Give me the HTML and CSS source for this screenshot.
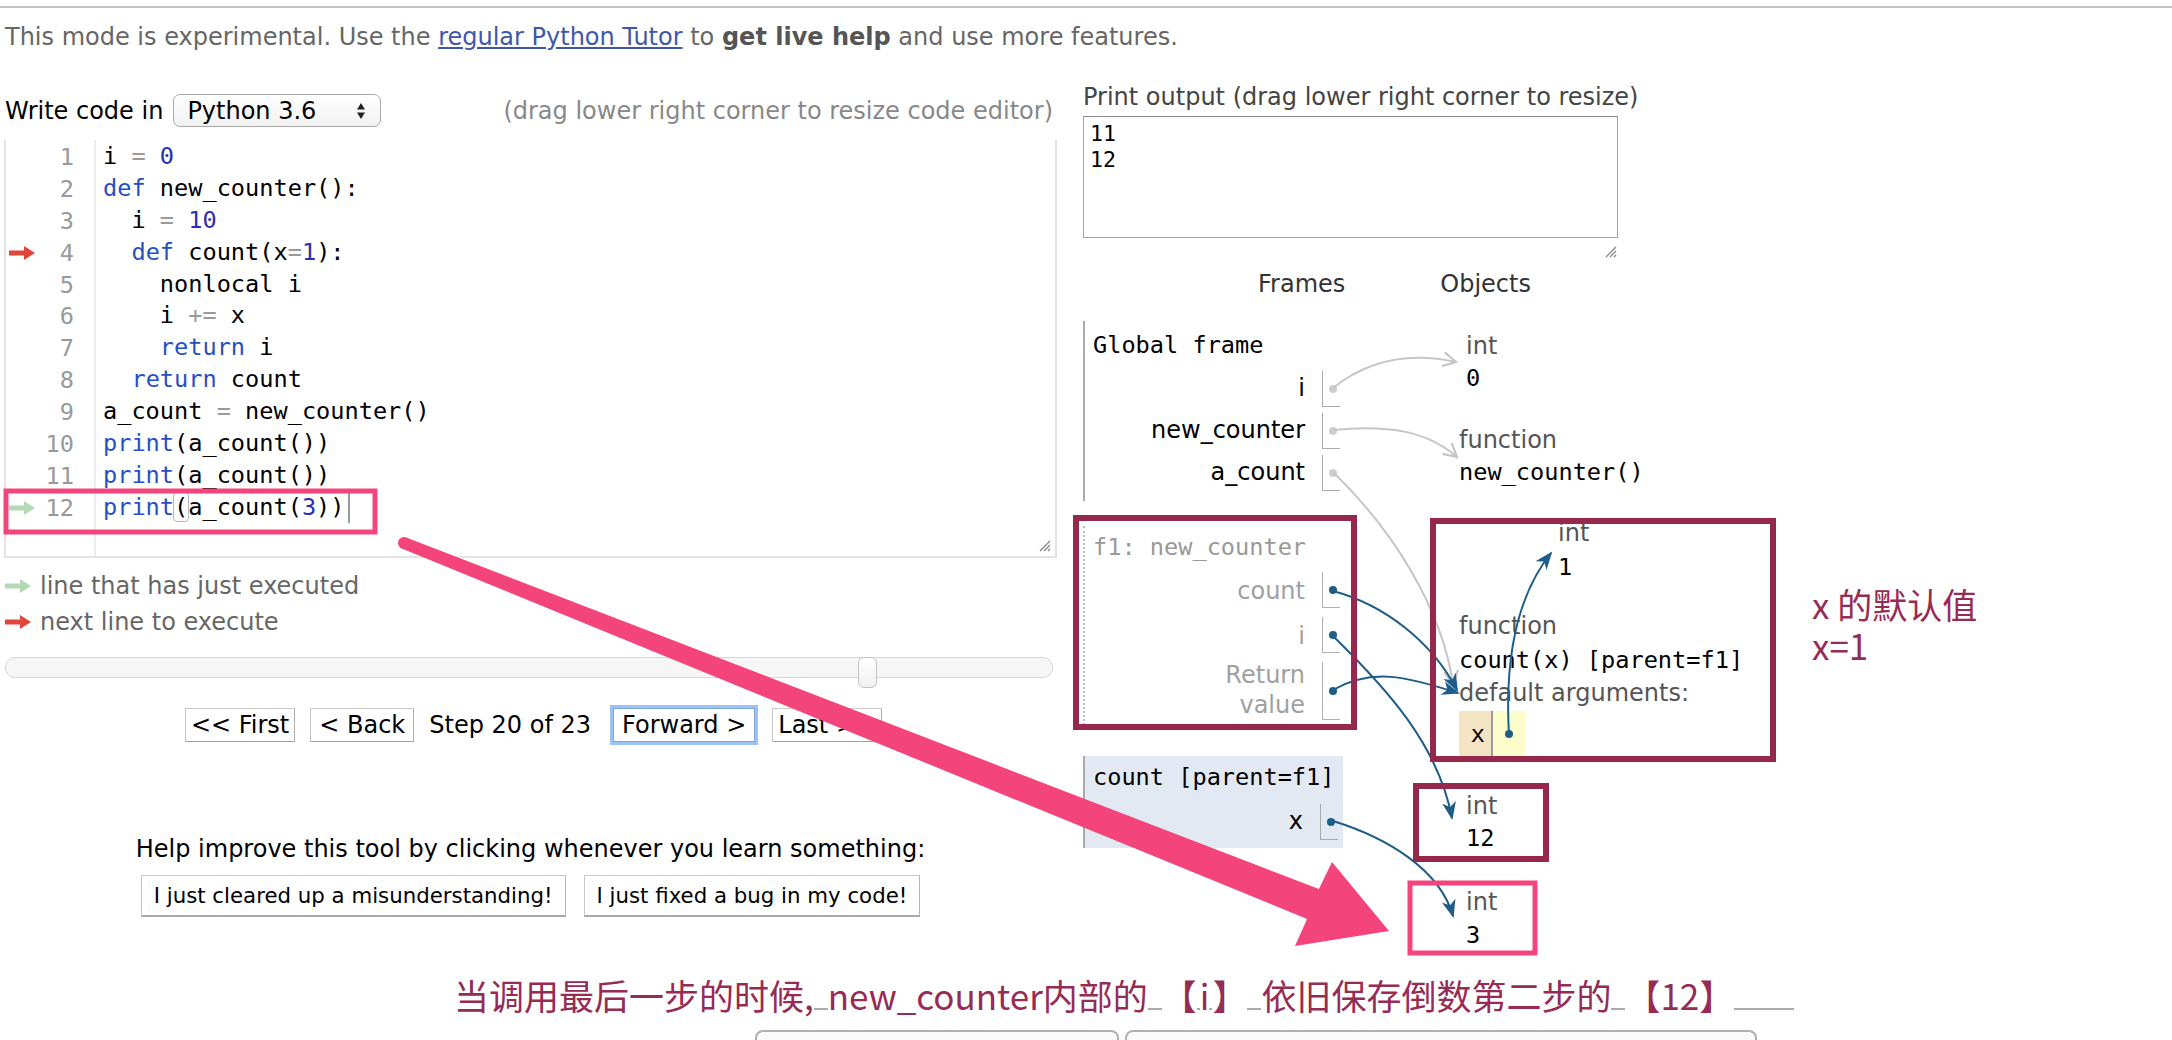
FILE: index.html
```html
<!DOCTYPE html>
<html lang="zh-CN">
<head>
<meta charset="utf-8">
<title>Python Tutor - Live Programming Mode</title>
<link rel="stylesheet" href="styles.css">
</head>
<body>
<div class="page">
  <div class="topbar"></div>
  <p class="notice">This mode is experimental. Use the <a href="#">regular Python Tutor</a> to <b>get live help</b> and use more features.</p>

  <div class="main">
    <div class="left">
      <div class="langrow">
        <span class="langlabel">Write code in</span>
        <span class="select">Python 3.6
          <svg class="selarrows" width="10" height="18" viewBox="0 0 10 18"><path d="M1,7.5 L5,1 L9,7.5 Z M1,10.5 L5,17 L9,10.5 Z" fill="#222"/></svg>
        </span>
        <span class="hint">(drag lower right corner to resize code editor)</span>
      </div>

      <div class="editor">
        <div class="gutter">
          <div class="gl"><span class="ga"></span><span class="gn">1</span></div>
          <div class="gl"><span class="ga"></span><span class="gn">2</span></div>
          <div class="gl"><span class="ga"></span><span class="gn">3</span></div>
          <div class="gl"><span class="ga"><svg width="26" height="14" viewBox="0 0 26 14"><path d="M0,4.5 H15 V0 L26,7 L15,14 V9.5 H0 Z" fill="#e0463c"/></svg></span><span class="gn">4</span></div>
          <div class="gl"><span class="ga"></span><span class="gn">5</span></div>
          <div class="gl"><span class="ga"></span><span class="gn">6</span></div>
          <div class="gl"><span class="ga"></span><span class="gn">7</span></div>
          <div class="gl"><span class="ga"></span><span class="gn">8</span></div>
          <div class="gl"><span class="ga"></span><span class="gn">9</span></div>
          <div class="gl"><span class="ga"></span><span class="gn">10</span></div>
          <div class="gl"><span class="ga"></span><span class="gn">11</span></div>
          <div class="gl"><span class="ga"><svg width="26" height="14" viewBox="0 0 26 14"><path d="M0,4.5 H15 V0 L26,7 L15,14 V9.5 H0 Z" fill="#b4d9b4"/></svg></span><span class="gn">12</span></div>
        </div>
        <div class="code">
<div class="cl">i <span class="op">=</span> <span class="num">0</span></div>
<div class="cl"><span class="kw">def</span> new_counter():</div>
<div class="cl">  i <span class="op">=</span> <span class="num">10</span></div>
<div class="cl">  <span class="kw">def</span> count(x<span class="op">=</span><span class="num">1</span>):</div>
<div class="cl">    nonlocal i</div>
<div class="cl">    i <span class="op">+=</span> x</div>
<div class="cl">    <span class="kw">return</span> i</div>
<div class="cl">  <span class="kw">return</span> count</div>
<div class="cl">a_count <span class="op">=</span> new_counter()</div>
<div class="cl"><span class="kw">print</span>(a_count())</div>
<div class="cl"><span class="kw">print</span>(a_count())</div>
<div class="cl"><span class="kw">print</span><span class="match">(</span>a_count(<span class="num">3</span>))<span class="cursor"></span></div>
        </div>
        <svg class="resize" width="14" height="14" viewBox="0 0 14 14"><path d="M13,3 L3,13 M13,7 L7,13 M13,11 L11,13" stroke="#888" stroke-width="1.3"/></svg>
      </div>

      <div class="legend">
        <div class="lg"><svg width="26" height="14" viewBox="0 0 26 14"><path d="M0,4.5 H15 V0 L26,7 L15,14 V9.5 H0 Z" fill="#b4d9b4"/></svg><span>line that has just executed</span></div>
        <div class="lg"><svg width="26" height="14" viewBox="0 0 26 14"><path d="M0,4.5 H15 V0 L26,7 L15,14 V9.5 H0 Z" fill="#e0463c"/></svg><span>next line to execute</span></div>
      </div>

      <div class="slider">
        <div class="track"></div>
        <div class="thumb"></div>
      </div>

      <div class="nav">
        <span class="btn">&lt;&lt; First</span>
        <span class="btn back">&lt; Back</span>
        <span class="step">Step 20 of 23</span>
        <span class="btn fwd">Forward &gt;</span>
        <span class="btn last">Last &gt;&gt;</span>
      </div>

      <div class="help">Help improve this tool by clicking whenever you learn something:</div>
      <div class="helpbtns">
        <span class="hbtn">I just cleared up a misunderstanding!</span>
        <span class="hbtn">I just fixed a bug in my code!</span>
      </div>
    </div>

    <div class="right">
      <div class="outlabel">Print output (drag lower right corner to resize)</div>
      <div class="output">11<br>12</div>
      <div class="outresize"><svg width="14" height="14" viewBox="0 0 14 14"><path d="M13,3 L3,13 M13,7 L7,13 M13,11 L11,13" stroke="#888" stroke-width="1.3"/></svg></div>
      <div class="vizhead"><span class="vh-frames">Frames</span><span class="vh-objects">Objects</span></div>

      <div class="viz">
        <div class="frames">
          <div class="frame global">
            <div class="ftitle">Global frame</div>
            <div class="vrow"><span class="vname">i</span><span class="vval"><span class="dot grey"></span></span></div>
            <div class="vrow"><span class="vname">new_counter</span><span class="vval"><span class="dot grey"></span></span></div>
            <div class="vrow"><span class="vname">a_count</span><span class="vval"><span class="dot grey"></span></span></div>
          </div>
          <div class="frame f1">
            <div class="ftitle">f1: new_counter</div>
            <div class="vrow r45"><span class="vname">count</span><span class="vval"><span class="dot"></span></span></div>
            <div class="vrow r45"><span class="vname">i</span><span class="vval"><span class="dot"></span></span></div>
            <div class="vrow rret"><span class="vname">Return<br>value</span><span class="vval"><span class="dot"></span></span></div>
          </div>
          <div class="frame cur">
            <div class="ftitle">count [parent=f1]</div>
            <div class="vrow"><span class="vname">x</span><span class="vval"><span class="dot"></span></span></div>
          </div>
        </div>

        <div class="objects">
          <div class="obj o-int0"><div class="otype">int</div><div class="oval">0</div></div>
          <div class="obj o-fn1"><div class="otype">function</div><div class="oval">new_counter()</div></div>
          <div class="obj o-int1"><div class="otype">int</div><div class="oval">1</div></div>
          <div class="obj o-fn2">
            <div class="otype">function</div>
            <div class="oval">count(x) [parent=f1]</div>
            <div class="otype">default arguments:</div>
            <div class="defargs"><span class="dname">x</span><span class="dval"><span class="dot"></span></span></div>
          </div>
          <div class="obj o-int12"><div class="otype">int</div><div class="oval">12</div></div>
          <div class="obj o-int3"><div class="otype">int</div><div class="oval">3</div></div>
        </div>
      </div>
    </div>
  </div>

  <div class="note">当调用最后一步的时候,<span class="gap"></span>new_counter内部的<span class="gap"></span>【<span class="gap s"></span>i<span class="gap s"></span>】<span class="gap"></span>依旧保存倒数第二步的<span class="gap"></span>【12】<span class="gap tail"></span></div>

  <div class="bottomctrls"><span class="bbox b1"></span><span class="bbox b2"></span></div>

  <svg class="overlay" width="2172" height="1040" viewBox="0 0 2172 1040">
    <defs>
      <marker id="mb" markerUnits="userSpaceOnUse" markerWidth="18" markerHeight="18" viewBox="0 0 18 18" refX="16" refY="9" orient="auto">
        <path d="M0,2 L18,9 L0,16 L5,9 Z" fill="#1d5d87"/>
      </marker>
      <marker id="mg" markerUnits="userSpaceOnUse" markerWidth="18" markerHeight="18" viewBox="0 0 18 18" refX="15" refY="9" orient="auto">
        <path d="M2,2 L15,9 L2,16" fill="none" stroke="#c6c6c6" stroke-width="2.2"/>
      </marker>
    </defs>
    <path class="ag" d="M1333,388 C1368,360 1410,352 1456,362"/>
    <path class="ag" d="M1333,430 C1390,424 1428,432 1457,457"/>
    <path class="ag" d="M1333,472 C1395,532 1442,610 1453,684"/>
    <path class="ab" d="M1333,591 C1385,605 1432,642 1457,690"/>
    <path class="ab" d="M1333,636 C1388,690 1438,745 1452,818"/>
    <path class="ab" d="M1333,690 C1372,668 1405,676 1458,693"/>
    <path class="ab" d="M1333,821 C1388,838 1440,870 1453,916"/>
    <path class="ab" d="M1509,735 C1504,650 1520,592 1551,553"/>

    <rect class="mr" x="1076" y="518" width="278" height="209"/>
    <rect class="mr" x="1433" y="521" width="340" height="238"/>
    <rect class="mr" x="1416" y="786" width="130" height="73"/>

    <rect class="pk" x="6" y="491" width="369" height="41"/>
    <rect class="pk" x="1410" y="883" width="125" height="70"/>

    <path d="M406.2,537.4 L1318.9,889.1 L1332,862 L1389,931 L1295,946 L1307.1,918.9 L401.8,548.6 Z" fill="#f4447c"/>
    <circle cx="404" cy="543" r="6" fill="#f4447c"/>
  </svg>

  <div class="xnote">x 的默认值<br>x=1</div>
</div>
</body>
</html>
```

FILE: styles.css
```css
* { box-sizing: border-box; }
html, body { margin: 0; padding: 0; height: 1040px; overflow: hidden; background: #fff; }
body { font-family: "DejaVu Sans", "Noto Sans CJK SC", sans-serif; font-size: 24px; color: #000; }

.page { position: relative; width: 2172px; height: 1040px; padding-top: 6px; }
.topbar { border-top: 2px solid #c2c2c2; }

.notice { margin: 14px 0 0 5px; line-height: 30px; color: #666; white-space: nowrap; }
.notice a { color: #3d58a8; text-decoration: underline; }
.notice b { color: #555; }

.main { display: flex; margin-top: 31px; height: 834px; }

/* ---------- left column ---------- */
.left { width: 1053px; margin-left: 4px; padding-top: 11px; }

.langrow { display: flex; align-items: center; height: 33px; }
.langlabel { margin-left: 1px; }
.select { position: relative; display: flex; align-items: center; margin-left: 10px; width: 208px; height: 33px;
  padding-left: 13px; border: 1px solid #a8a8a8; border-radius: 7px; background: linear-gradient(#ffffff, #f1f1f1); }
.selarrows { position: absolute; right: 14px; top: 7px; }
.hint { margin-left: auto; margin-right: 4px; color: #888; }

.editor { position: relative; display: flex; margin-top: 13px; height: 418px;
  border: 2px solid #e4e4e4; border-top: 0; }
.gutter { width: 90px; padding-top: 1px; border-right: 2px solid #ececec; }
.gl { display: flex; align-items: center; height: 31.9px; }
.ga { width: 40px; padding-left: 3px; display: flex; align-items: center; }
.gn { flex: 1; text-align: right; padding-right: 20px; color: #999;
  font-family: "DejaVu Sans Mono", monospace; font-size: 23.6px; }
.code { padding: 1px 0 0 7px; font-family: "DejaVu Sans Mono", monospace; font-size: 23.6px; }
.cl { height: 31.9px; line-height: 31.9px; white-space: pre; position: relative; }
.kw { color: #2450c6; }
.num { color: #2a2fb0; }
.op { color: #9a9a9a; }
.match { outline: 1px solid #b8b8b8; border-radius: 3px; }
.cursor { display: inline-block; width: 2px; height: 30px; background: #999; vertical-align: middle; margin-left: 3px; }
.resize { position: absolute; right: 4px; bottom: 4px; }

.legend { margin-top: 10px; color: #666; }
.lg { display: flex; align-items: center; height: 36px; padding-left: 1px; }
.lg span { margin-left: 9px; }

.slider { position: relative; margin-top: 17px; height: 31px; }
.track { margin: 5px 4px 0 1px; height: 21px; border: 1px solid #d6d6d6; border-radius: 10px; background: #f6f6f6; }
.thumb { position: absolute; left: 854px; top: 0; width: 19px; height: 31px; border: 1px solid #c4c4c4;
  border-radius: 6px; background: linear-gradient(#ffffff, #f0f0f0); }

.nav { display: flex; justify-content: center; align-items: center; margin-top: 20px; height: 34px; padding-left: 6px; }
.btn { display: inline-flex; align-items: center; height: 34px; padding: 0 5px; border: 1px solid #c8c8c8;
  border-bottom-color: #a0a0a0; border-right-color: #b0b0b0; background: #fff; }
.back { margin-left: 15px; padding: 0 8px; }
.step { margin-left: 15px; }
.fwd { margin-left: 22px; padding: 0 8px; box-shadow: 0 0 0 3px #9cc4f2; border-color: #7fa6d6; }
.last { margin-left: 17px; }

.help { margin-top: 92px; text-align: center; line-height: 30px; }
.helpbtns { display: flex; justify-content: center; gap: 18px; margin-top: 11px; }
.hbtn { display: inline-flex; align-items: center; height: 42px; padding: 0 12px; font-size: 21.3px;
  border: 1px solid #c8c8c8; border-bottom: 2px solid #a8a8a8; border-right-color: #b4b4b4; background: #fff; }

/* ---------- right column ---------- */
.right { margin-left: 26px; width: 720px; }
.outlabel { line-height: 28px; color: #444; }
.output { margin-top: 5px; width: 535px; height: 122px; padding: 4px 6px; border: 1px solid #a4a4a4; border-top-color: #8c8c8c;
  font-family: "DejaVu Sans Mono", monospace; font-size: 21.6px; line-height: 26px; }
.outresize { width: 535px; height: 20px; display: flex; justify-content: flex-end; align-items: flex-end; padding-right: 1px; }
.vizhead { margin-top: 12px; line-height: 28px; padding-left: 175px; color: #333; }
.vh-objects { margin-left: 95px; }

.viz { display: flex; margin-top: 23px; }
.frames { width: 262px; }
.frame { border-left: 2px solid #aaa; }
.ftitle { font-family: "DejaVu Sans Mono", monospace; font-size: 23.6px; line-height: 28px; padding-left: 8px; }
.global { padding: 10px 0 8px; }
.global .ftitle { margin-bottom: 8px; }
.vrow { display: flex; height: 42px; }
.vname { flex: 1; text-align: right; padding-right: 17px; align-self: center; line-height: 30px; }
.vval { display: flex; align-items: center; width: 18px; height: 36px; margin: 4px 5px 2px 0;
  border-left: 1px solid #aaa; border-bottom: 1px solid #aaa; padding-left: 6px; }
.dot { display: block; width: 8px; height: 8px; border-radius: 50%; background: #1d5d87; }
.dot.grey { background: #cfcfcf; }

.f1 { margin-top: 25px; padding: 7px 0 3px; border-left: 2px dotted #bbb; color: #a0a0a0; }
.f1 .ftitle { color: #999; margin-bottom: 7px; }
.f1 .vval { border-color: #b0b0b0; }
.r45 { height: 45px; }
.rret { height: 64px; }
.rret .vname { line-height: 30px; }
.rret .vval { height: 58px; }

.cur { margin-top: 31px; width: 260px; padding: 7px 0 6px; background: #e2e9f3; }
.cur .ftitle { margin-bottom: 9px; }

.objects { position: relative; flex: 1; }
.obj { position: absolute; }
.otype { color: #555; line-height: 32px; white-space: nowrap; }
.oval { font-family: "DejaVu Sans Mono", monospace; font-size: 23.6px; line-height: 32px; white-space: nowrap; }
.o-int0 { left: 121px; top: 9px; }
.o-fn1 { left: 114px; top: 103px; }
.o-int1 { left: 213px; top: 195px; }
.o-int1 .otype, .o-int1 .oval { line-height: 34px; }
.o-fn2 { left: 114px; top: 289px; }
.o-fn2 .otype, .o-fn2 .oval { line-height: 33.5px; }
.defargs { display: flex; height: 48px; margin-top: 0; }
.dname { width: 34px; display: flex; align-items: center; justify-content: flex-end; padding-right: 6px; background: #f3e5c4;
  border-right: 2px solid #999; border-bottom: 2px solid #999; font-family: "DejaVu Sans Mono", monospace; font-size: 23.6px; }
.dval { width: 32px; display: flex; align-items: center; padding-left: 12px; background: #fdfccb; border-bottom: 2px solid #999; }
.o-int12 { left: 121px; top: 469px; }
.o-int3 { left: 121px; top: 565px; }
.o-int3 .otype, .o-int3 .oval { line-height: 33px; }

/* ---------- annotations ---------- */
.note { margin: 56px 0 0 454px; font-family: "Noto Sans CJK SC", sans-serif; font-size: 35px; line-height: 44px;
  color: #962b55; white-space: nowrap; }
.gap { display: inline-block; width: 14px; height: 2px; border-bottom: 2px solid #aaa; }
.gap.s { width: 3px; }
.gap.tail { width: 60px; }

.bottomctrls { display: flex; gap: 6px; margin: 13px 0 0 755px; }
.bbox { display: block; height: 40px; border: 2px solid #b0b0b0; border-radius: 8px; background: #fafafa; }
.b1 { width: 364px; }
.b2 { width: 632px; }

.overlay { position: absolute; left: 0; top: 0; pointer-events: none; }
.ag { fill: none; stroke: #c6c6c6; stroke-width: 2; marker-end: url(#mg); }
.ab { fill: none; stroke: #1d5d87; stroke-width: 2; marker-end: url(#mb); }
.mr { fill: none; stroke: #97284d; stroke-width: 6; }
.pk { fill: none; stroke: #f4447c; stroke-width: 5; }

.xnote { position: absolute; left: 1812px; top: 583px; font-family: "Noto Sans CJK SC", sans-serif; font-size: 35px;
  line-height: 41px; color: #962b55; }
```
